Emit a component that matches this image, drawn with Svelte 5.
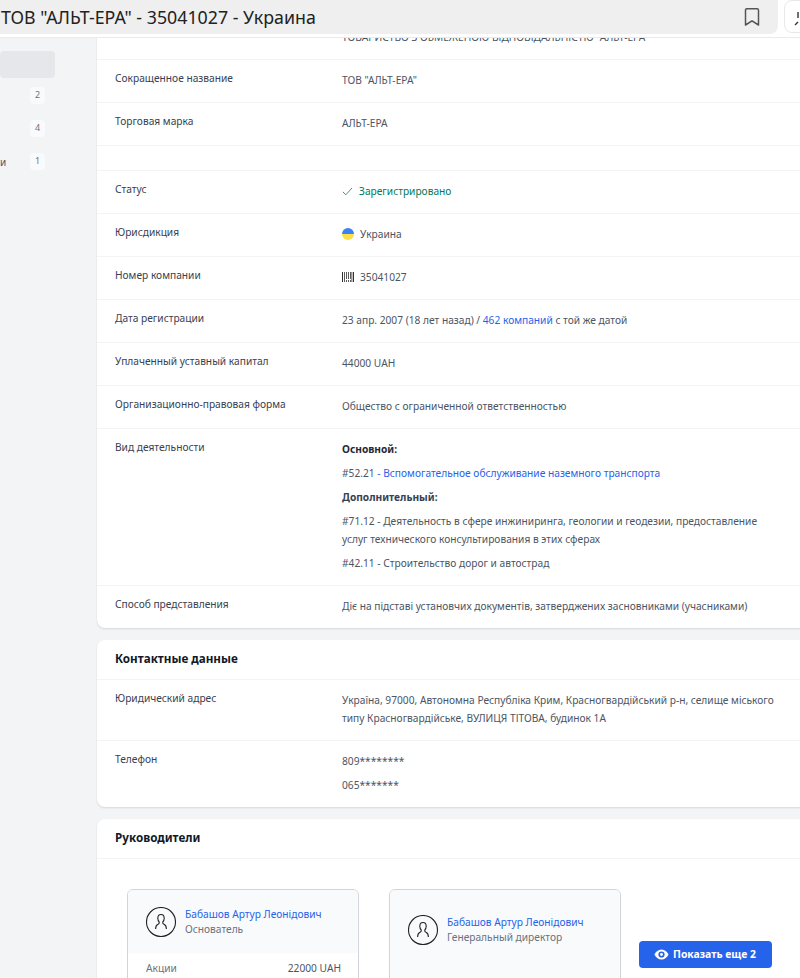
<script>
	const general = [
		{ label: 'Сокращенное название', value: 'ТОВ "АЛЬТ-ЕРА"' },
		{ label: 'Торговая марка', value: 'АЛЬТ-ЕРА' }
	];
	const sideItems = [
		{ text: '', count: 2 },
		{ text: '', count: 4 },
		{ text: 'и', count: 1 }
	];
	const avatarPath =
		'M15 7.500c-2 0-3.200 1.600-3.200 3.800 0 1.600.6 2.900 1.400 3.700v.8c0 .8-.5 1.200-1.200 1.500-1.500.6-2.300 1.800-2.400 4.700M15 7.500c2 0 3.200 1.600 3.200 3.800 0 1.600-.6 2.900-1.400 3.700v.8c0 .8.5 1.200 1.200 1.500 1.500.6 2.300 1.800 2.400 4.700';
</script>

<div class="page">
	<header class="topbar">
		<div class="title">
			<h1>ТОВ "АЛЬТ-ЕРА" - 35041027 - Украина</h1>
			<svg class="bookmark" viewBox="0 0 16 18" width="16" height="18" fill="none" stroke="#555" stroke-width="1.5">
				<path d="M1.500 2.200q0-1.400 1.400-1.400h10.200q1.400 0 1.400 1.400v14.800l-6.500-4.200-6.500 4.200z" stroke-linejoin="round" />
			</svg>
		</div>
		<div class="share">
			<svg viewBox="0 0 16 18" width="16" height="18" fill="none" stroke="#333" stroke-width="1.4">
				<path d="M5 3v6M5 13l-3 3" />
			</svg>
		</div>
	</header>

	<div class="layout">
		<aside class="sidebar">
			<div class="side-active"></div>
			{#each sideItems as item}
				<div class="side-item">
					<span>{item.text}</span>
					<span class="badge">{item.count}</span>
				</div>
			{/each}
		</aside>

		<main class="main">
			<section class="card first">
				<div class="row">
					<div class="label"></div>
					<div class="value">ТОВАРИСТВО З ОБМЕЖЕНОЮ ВІДПОВІДАЛЬНІСТЮ "АЛЬТ-ЕРА"</div>
				</div>
				{#each general as row}
					<div class="row">
						<div class="label">{row.label}</div>
						<div class="value">{row.value}</div>
					</div>
				{/each}
				<div class="row-empty"></div>
				<div class="row">
					<div class="label">Статус</div>
					<div class="value status">
						<svg viewBox="0 0 11 9" width="11" height="9" fill="none" stroke="#3f9a6b" stroke-width="1">
							<path d="M.8 4.800l3 3L10 1" />
						</svg>
						<span>Зарегистрировано</span>
					</div>
				</div>
				<div class="row">
					<div class="label">Юрисдикция</div>
					<div class="value with-icon">
						<span class="flag"></span>
						<span>Украина</span>
					</div>
				</div>
				<div class="row">
					<div class="label">Номер компании</div>
					<div class="value with-icon">
						<svg class="barcode" viewBox="0 0 12 10" width="12" height="10" fill="#333">
							<path d="M0 0h1v10H0zM2 0h.8v10H2zM4 0h.8v7H4zM4 8h.8v2H4zM6 0h.8v7H6zM6 8h.8v2H6zM8 0h.8v7H8zM8 8h.8v2H8zM9.500 0h.8v10h-.8zM11 0h1v10h-1z" />
						</svg>
						<span>35041027</span>
					</div>
				</div>
				<div class="row">
					<div class="label">Дата регистрации</div>
					<div class="value">23 апр. 2007 (18 лет назад) / <a href="#top">462 компаний</a> с той же датой</div>
				</div>
				<div class="row">
					<div class="label">Уплаченный уставный капитал</div>
					<div class="value">44000 UAH</div>
				</div>
				<div class="row">
					<div class="label">Организационно-правовая форма</div>
					<div class="value">Общество с ограниченной ответственностью</div>
				</div>
				<div class="row">
					<div class="label">Вид деятельности</div>
					<div class="value stack">
						<p><strong class="dark">Основной:</strong></p>
						<p>#52.21 <a href="#top">- Вспомогательное обслуживание наземного транспорта</a></p>
						<p><strong>Дополнительный:</strong></p>
						<p>#71.12 - Деятельность в сфере инжиниринга, геологии и геодезии, предоставление услуг технического консультирования в этих сферах</p>
						<p>#42.11 - Строительство дорог и автострад</p>
					</div>
				</div>
				<div class="row last">
					<div class="label">Способ представления</div>
					<div class="value">Діє на підставі установчих документів, затверджених засновниками (учасниками)</div>
				</div>
			</section>

			<section class="card">
				<h2>Контактные данные</h2>
				<div class="row">
					<div class="label">Юридический адрес</div>
					<div class="value">Україна, 97000, Автономна Республіка Крим, Красногвардійський р-н, селище міського типу Красногвардійське, ВУЛИЦЯ ТІТОВА, будинок 1А</div>
				</div>
				<div class="row last">
					<div class="label">Телефон</div>
					<div class="value stack">
						<p>809********</p>
						<p>065*******</p>
					</div>
				</div>
			</section>

			<section class="card">
				<h2>Руководители</h2>
				<div class="people">
					<article class="person">
						<div class="person-head">
							<svg class="avatar" viewBox="0 0 30 30" width="30" height="30" fill="none" stroke="#222" stroke-width="1.100">
								<circle cx="15" cy="15" r="14.500" />
								<path d={avatarPath} />
							</svg>
							<div>
								<a class="name" href="#top">Бабашов Артур Леонідович</a>
								<div class="role">Основатель</div>
							</div>
						</div>
						<div class="person-row">
							<span>Акции</span>
							<span class="amount">22000 UAH</span>
						</div>
					</article>
					<article class="person plain">
						<div class="person-head">
							<svg class="avatar" viewBox="0 0 30 30" width="30" height="30" fill="none" stroke="#222" stroke-width="1.100">
								<circle cx="15" cy="15" r="14.500" />
								<path d={avatarPath} />
							</svg>
							<div>
								<a class="name" href="#top">Бабашов Артур Леонідович</a>
								<div class="role">Генеральный директор</div>
							</div>
						</div>
					</article>
				</div>
			</section>
		</main>
	</div>

	<button class="more">
		<svg viewBox="0 0 16 12" width="15" height="11" fill="#fff">
			<path fill-rule="evenodd" d="M8 .5C4.500 .5 1.800 3 .3 6c1.500 3 4.200 5.500 7.700 5.500S14.200 9 15.700 6C14.200 3 11.500 .5 8 .5zM8 2.600a3.400 3.400 0 1 1 0 6.800 3.400 3.400 0 0 1 0-6.800zM8 4.400a1.600 1.600 0 1 0 0 3.200 1.600 1.600 0 0 0 0-3.200z" />
		</svg>
		<span class="more-text">Показать еще 2</span>
	</button>
</div>

<style>
	:global(body) {
		margin: 0;
		background: #f3f4f6;
	}

	.page {
		position: relative;
		width: 800px;
		height: 978px;
		overflow: hidden;
		background: #f3f4f6;
		font-family: 'Noto Sans', sans-serif;
		font-size: 10.2px;
		color: #374151;
	}

	.topbar {
		position: relative;
		z-index: 2;
		display: flex;
		gap: 6px;
		height: 38px;
		box-sizing: border-box;
		background: #fff;
		border-bottom: 1px solid #f0e6f2;
	}

	.title {
		flex: none;
		display: flex;
		align-items: center;
		justify-content: space-between;
		width: 778px;
		height: 34px;
		padding: 0 18px 0 1px;
		box-sizing: border-box;
		background: #efefef;
		border-radius: 0 0 8px 0;
	}

	h1 {
		margin: 0;
		font-size: 17.8px;
		font-weight: 400;
		color: #222;
		white-space: nowrap;
	}

	.bookmark {
		display: block;
	}

	.share {
		flex: none;
		width: 40px;
		height: 33px;
		padding: 8px 0 0 8px;
		box-sizing: border-box;
		border: 1px solid #e8e8e8;
		border-radius: 8px;
	}

	.layout {
		display: flex;
	}

	.sidebar {
		flex: none;
		width: 97px;
		padding-top: 13px;
		box-sizing: border-box;
	}

	.side-active {
		width: 55px;
		height: 27px;
		margin-bottom: 9px;
		background: #e5e7eb;
		border-radius: 4px;
	}

	.side-item {
		display: flex;
		align-items: center;
		justify-content: space-between;
		width: 45px;
		height: 17px;
		margin-bottom: 16px;
		font-size: 10px;
		color: #4b5563;
	}

	.badge {
		width: 15px;
		height: 17px;
		line-height: 16px;
		text-align: center;
		font-size: 9px;
		color: #6b7280;
		background: #f9fafb;
		border-radius: 4px;
	}

	.main {
		flex: none;
		width: 720px;
	}

	.card {
		margin-bottom: 12px;
		background: #fff;
		border-radius: 8px;
		box-shadow: 0 1px 2px rgba(0, 0, 0, 0.12);
	}

	.first {
		margin-top: -21px;
		border-radius: 0 0 8px 8px;
	}

	h2 {
		margin: 0;
		height: 39px;
		padding-left: 18px;
		line-height: 37.5px;
		font-size: 11.7px;
		font-weight: 700;
		color: #111827;
		border-bottom: 1px solid #f3f4f6;
	}

	.row {
		display: grid;
		grid-template-columns: 227px 433px;
		padding: 0 42px 13px 18px;
		border-bottom: 1px solid #f3f4f6;
	}

	.row.last {
		border-bottom: none;
	}

	.row-empty {
		height: 24px;
		border-bottom: 1px solid #f3f4f6;
	}

	.label {
		padding-top: 9px;
		line-height: 18px;
		color: #374151;
	}

	.value {
		padding-top: 11px;
		line-height: 18px;
		color: #4b5563;
	}

	.stack p {
		margin: 0 0 6px;
	}

	.stack p:last-child {
		margin-bottom: 0;
	}

	strong {
		font-weight: 700;
		color: #374151;
	}

	.dark {
		color: #1f2937;
	}

	a {
		color: #2563eb;
		text-decoration: none;
	}

	.status,
	.with-icon {
		display: flex;
		align-items: center;
	}

	.status {
		gap: 6px;
		color: #047857;
	}

	.with-icon {
		gap: 6px;
	}

	.flag {
		width: 12px;
		height: 12px;
		border-radius: 50%;
		background: linear-gradient(#3b82f6 50%, #fde047 50%);
	}

	.people {
		display: flex;
		gap: 31px;
		padding: 30px 0 0 30px;
	}

	.person {
		width: 232px;
		box-sizing: border-box;
		background: #fff;
		border: 1px solid #d1d5db;
		border-radius: 6px;
		overflow: hidden;
	}

	.person + .person {
		margin-left: -1px;
	}

	.person.plain {
		height: 160px;
		background: #f9fafb;
	}

	.person-head {
		display: flex;
		align-items: center;
		gap: 9px;
		height: 63px;
		padding-left: 18px;
		background: #f9fafb;
	}

	.plain .person-head {
		height: 80px;
	}

	.avatar {
		flex: none;
	}

	.name {
		display: block;
		line-height: 15px;
	}

	.role {
		line-height: 15px;
		color: #6b7280;
	}

	.person-row {
		display: flex;
		justify-content: space-between;
		padding: 7px 17px 40px 18px;
		line-height: 16px;
		color: #6b7280;
	}

	.amount {
		color: #4b5563;
	}

	.more {
		position: absolute;
		left: 639px;
		top: 941px;
		display: flex;
		align-items: center;
		justify-content: center;
		gap: 4px;
		width: 133px;
		height: 27px;
		padding: 0 1px 2px 0;
		border: none;
		border-radius: 4px;
		background: #2563eb;
		color: #fff;
		font-family: inherit;
		font-size: 10.4px;
		font-weight: 700;
	}

	.more svg {
		position: relative;
		top: 1px;
	}

	.more-text {
		line-height: 14px;
	}
</style>
